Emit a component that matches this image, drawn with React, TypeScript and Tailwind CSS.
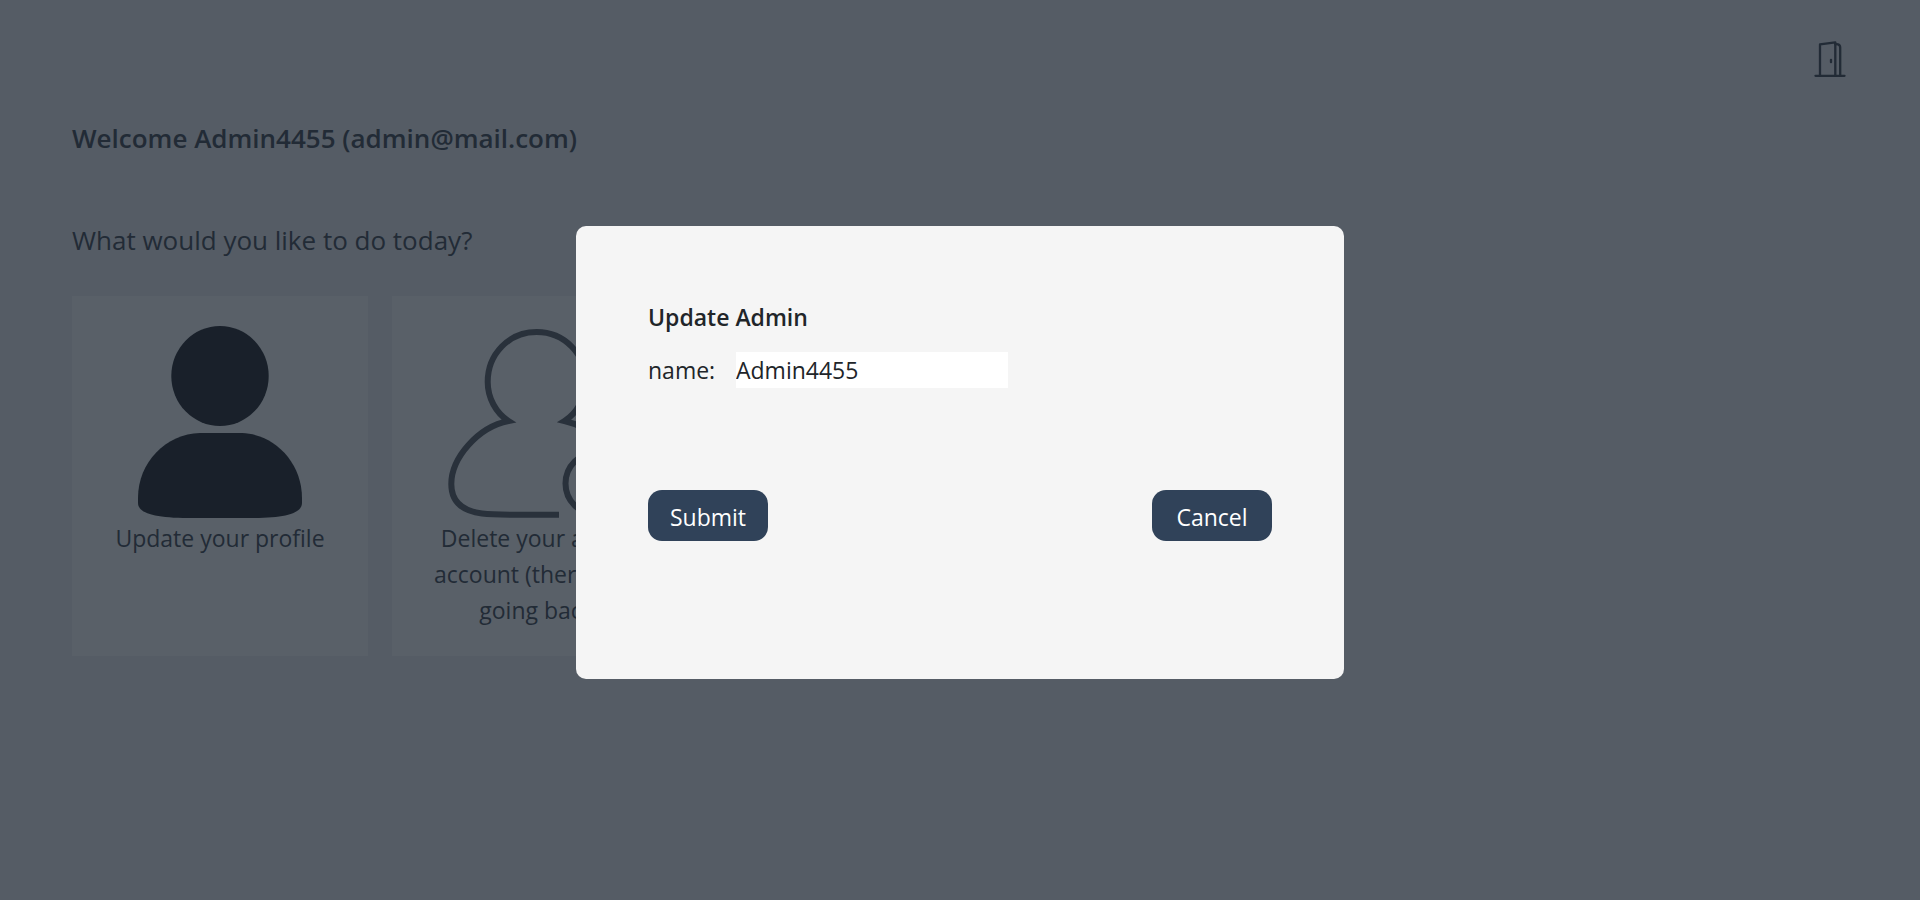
import { useState } from "react";

function DoorIcon() {
  return (
    <svg viewBox="0 0 32 36" className="h-9 w-8" fill="none" stroke="currentColor" strokeWidth="2.3" strokeLinejoin="round" strokeLinecap="round">
      <path d="M1.500 34.800H30.500" />
      <path d="M6 34.500V3.400L21.300 1.400V34.500" />
      <path d="M21.300 3L24 3.400Q26.200 4 26.200 6.500V34.500" />
      <path d="M17 18.800V21.200" />
    </svg>
  );
}

function ProfileIcon() {
  return (
    <svg viewBox="0 0 248 200" className="h-[200px] w-full text-[#19202a]" fill="currentColor">
      <ellipse cx="124" cy="56" rx="48.700" ry="50" />
      <path d="M104 113H146C178 114 206 142 206 178V183C206 193 190 198 156 198H92C58 198 42 193 42 183V178C42 142 70 114 104 113Z" />
    </svg>
  );
}

function DeleteIcon() {
  return (
    <svg viewBox="0 0 248 200" className="h-[200px] w-full text-[#29313b]" fill="none" stroke="currentColor" strokeWidth="6">
      <path d="M143 194.700C110 194.800 84 195.400 66 193.400C46 191 35.300 182 35.300 164C35.300 138 62 107 92.500 101C80 93 71.700 78 71.700 62C71.700 34 93 12 120.700 12C148.400 12 169.700 34 169.700 62C169.700 78 161 93 148.500 101C162 104 174 111 184 120" />
      <circle cx="180.500" cy="163.500" r="31" />
      <path d="M166 163.500H195" />
    </svg>
  );
}

const cardClass =
  "flex min-h-[360px] w-[296px] flex-col items-center bg-[#596068] p-6 text-center text-[23px] leading-9";
const buttonClass =
  "h-[51px] w-[120px] cursor-pointer rounded-[14px] bg-[#304259] pt-0.5 text-[23px] leading-9 text-white";

export default function App() {
  const [name, setName] = useState("Admin4455");

  return (
    <div className="min-h-screen bg-[#555c65] font-['Open_Sans','Noto_Sans',sans-serif] text-[#222b36]">
      <header className="flex justify-end px-[74px] pt-[41px]">
        <button type="button" aria-label="Log out" className="cursor-pointer">
          <DoorIcon />
        </button>
      </header>
      <main className="px-[72px] pt-[41px]">
        <h1 className="text-[26px] leading-10 font-semibold">Welcome Admin4455 (admin@mail.com)</h1>
        <p className="mt-[62px] text-[26px] leading-10">What would you like to do today?</p>
        <div className="mt-9 flex gap-6">
          <button type="button" className={cardClass}>
            <ProfileIcon />
            <span>Update your profile</span>
          </button>
          <button type="button" className={cardClass}>
            <DeleteIcon />
            <span>Delete your admin account (there is no going back)</span>
          </button>
        </div>
      </main>

      <div className="fixed inset-0 flex items-start justify-center pt-[226px]">
        <form
          role="dialog"
          aria-labelledby="dialog-title"
          onSubmit={(e) => e.preventDefault()}
          className="min-h-[453px] w-2/5 rounded-[10px] bg-[#f5f5f5] px-[72px] pt-[73px] pb-[72px] text-[23px] leading-9 text-[#212529]"
        >
          <h2 id="dialog-title" className="font-semibold">Update Admin</h2>
          <div className="mt-[17px] flex items-center gap-6">
            <label htmlFor="name" className="w-16">name:</label>
            <input
              id="name"
              value={name}
              onChange={(e) => setName(e.target.value)}
              className="h-9 w-[272px] bg-white outline-none"
            />
          </div>
          <div className="mt-[102px] flex justify-between">
            <button type="submit" className={buttonClass}>Submit</button>
            <button type="button" className={buttonClass}>Cancel</button>
          </div>
        </form>
      </div>
    </div>
  );
}
